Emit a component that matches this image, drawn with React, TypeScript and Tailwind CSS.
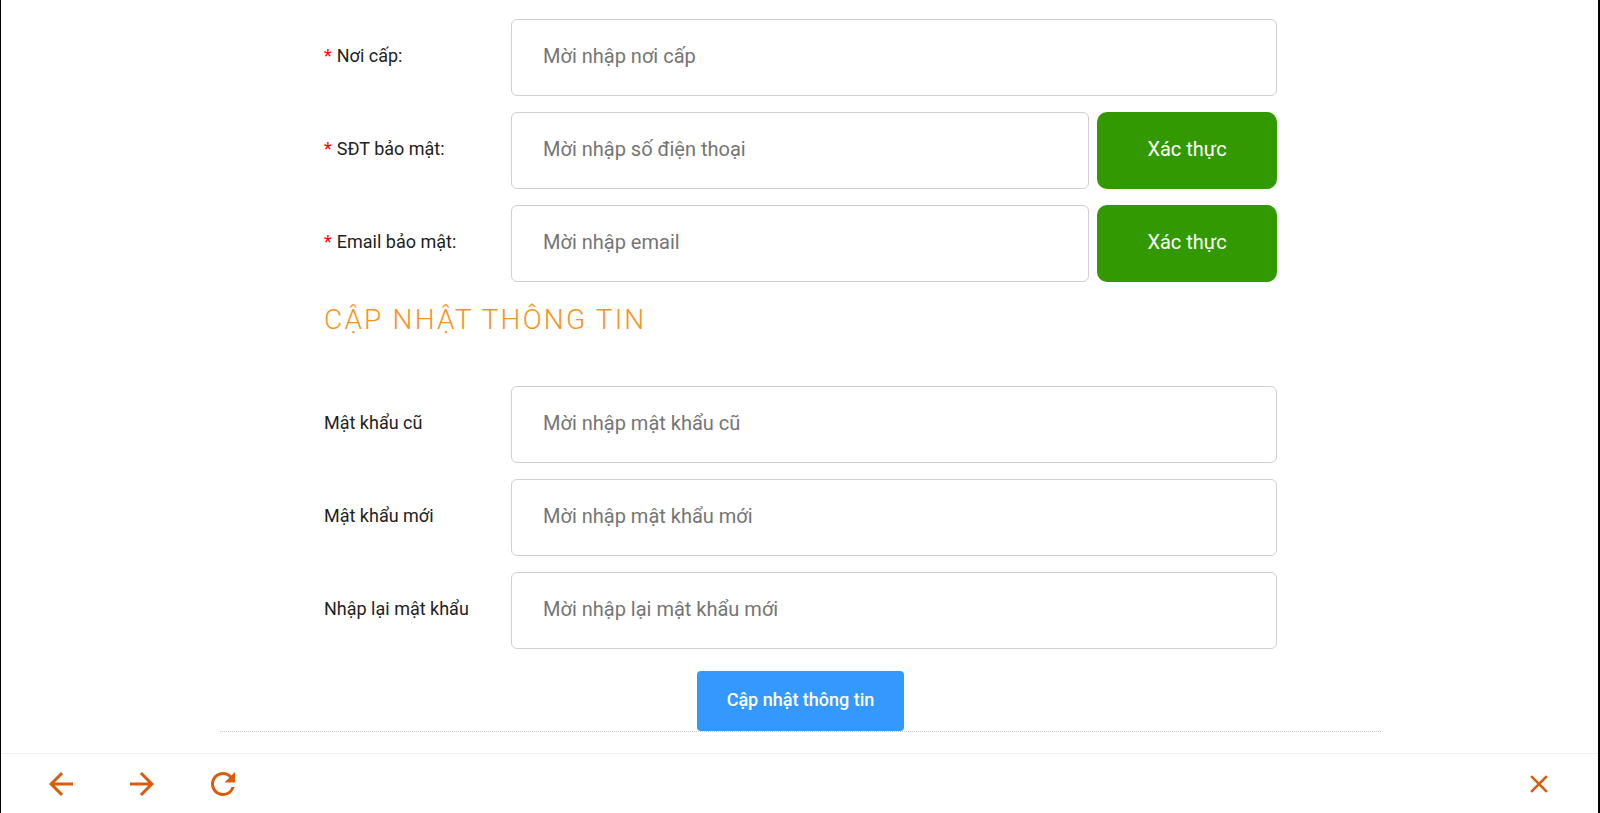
import { MdArrowBack, MdArrowForward, MdRefresh, MdClose } from "react-icons/md";

interface Field {
  label: string;
  placeholder: string;
  required?: boolean;
  verify?: boolean;
}

const identity: Field[] = [
  { label: "Nơi cấp:", placeholder: "Mời nhập nơi cấp", required: true },
  { label: "SĐT bảo mật:", placeholder: "Mời nhập số điện thoại", required: true, verify: true },
  { label: "Email bảo mật:", placeholder: "Mời nhập email", required: true, verify: true },
];

const passwords: Field[] = [
  { label: "Mật khẩu cũ", placeholder: "Mời nhập mật khẩu cũ" },
  { label: "Mật khẩu mới", placeholder: "Mời nhập mật khẩu mới" },
  { label: "Nhập lại mật khẩu", placeholder: "Mời nhập lại mật khẩu mới" },
];

function Row({ field }: { field: Field }) {
  return (
    <div className="flex items-center">
      <label className="w-[187px] shrink-0 pb-1 text-[18px] leading-6 text-[#222]">
        {field.required && <span className="mr-[5px] text-[#f00]">*</span>}
        {field.label}
      </label>
      <input
        type="text"
        placeholder={field.placeholder}
        className="h-[77px] min-w-0 flex-1 rounded-md border border-[#cfcfcf] bg-white pb-1 pl-[31px] pr-4 text-[20px] text-[#333] outline-none placeholder:text-[#757575]"
      />
      {field.verify && (
        <button className="ml-2 h-[77px] w-[180px] shrink-0 rounded-[10px] bg-[#339900] pb-[3px] text-[20px] text-white">
          Xác thực
        </button>
      )}
    </div>
  );
}

export default function App() {
  return (
    <div className="flex h-[813px] w-[1600px] flex-col overflow-hidden border-l border-r-2 border-black bg-white font-['Roboto',sans-serif]">
      <div className="flex-1 overflow-hidden pt-[19px] pl-[2px]">
        <div className="mx-auto w-[953px]">
          <div className="flex flex-col gap-4">
            {identity.map((f) => (
              <Row key={f.label} field={f} />
            ))}
          </div>

          <h2 className="mt-[21px] mb-[49px] text-[28px] leading-[34px] font-light tracking-[2.2px] text-[#f7941d]">
            CẬP NHẬT THÔNG TIN
          </h2>

          <div className="flex flex-col gap-4">
            {passwords.map((f) => (
              <Row key={f.label} field={f} />
            ))}
          </div>

          <div className="mt-[22px] flex justify-center">
            <button className="h-[60px] w-[207px] rounded bg-[#3399ff] pb-[3px] text-[18px] font-medium text-white">
              Cập nhật thông tin
            </button>
          </div>
        </div>
        <div className="mx-auto w-[1161px] border-t border-dotted border-[#c8c8c8]" />
      </div>

      <div className="flex h-[60px] shrink-0 items-center border-t border-[#eeeeee] pl-[42px] pr-[44px] text-[#d95b0b]">
        <div className="flex items-center gap-[45px]">
          <MdArrowBack size={36} />
          <MdArrowForward size={36} />
          <MdRefresh size={36} />
        </div>
        <div className="flex-1" />
        <MdClose size={30} />
      </div>
    </div>
  );
}
